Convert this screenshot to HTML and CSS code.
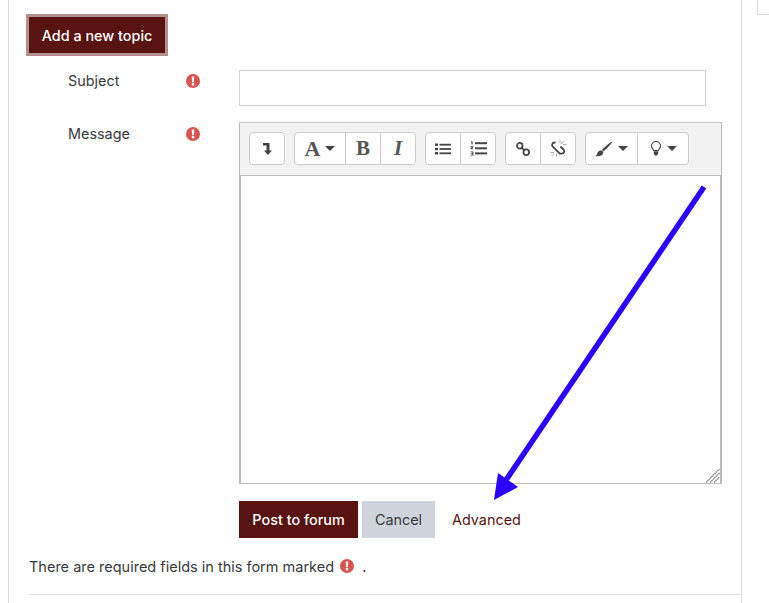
FILE: index.html
```html
<!DOCTYPE html>
<html lang="en">
<head>
<meta charset="utf-8">
<title>Add a new topic</title>
<link rel="stylesheet" href="styles.css">
</head>
<body>
<svg class="defs" width="0" height="0" aria-hidden="true">
  <symbol id="req" viewBox="0 0 14 14">
    <circle cx="7" cy="7" r="7" fill="#d9534f"/>
    <path d="M5.7 2.600h2.600l-.35 5.600H6.050z" fill="#fff"/>
    <rect x="5.800" y="9.100" width="2.400" height="2.400" rx=".5" fill="#fff"/>
  </symbol>
</svg>
<div class="page">
  <main class="card">
    <button class="btn-topic" type="button">Add a new topic</button>
    <form class="form">
      <div class="row row-subject">
        <label class="label">Subject</label>
        <svg class="req"><use href="#req"/></svg>
        <input class="input" type="text">
      </div>
      <div class="row row-message">
        <label class="label">Message</label>
        <svg class="req"><use href="#req"/></svg>
        <div class="editor">
          <div class="toolbar">
            <div class="group">
              <span class="tool w35"><svg width="12" height="15" viewBox="0 0 12 15"><path d="M2 2h6.500v7.500H11L6.900 14 3 9.500h2.500V4.500H2z" fill="#444"/></svg></span>
            </div>
            <div class="group">
              <span class="tool w50"><span class="glyph glyph-a">A</span><i class="caret"></i></span>
              <span class="tool w35"><span class="glyph">B</span></span>
              <span class="tool w35"><span class="glyph ital">I</span></span>
            </div>
            <div class="group">
              <span class="tool w35"><svg width="16" height="12" viewBox="0 0 16 12" fill="#444"><rect x="0" y="0.500" width="3" height="2.400"/><rect x="0" y="4.800" width="3" height="2.400"/><rect x="0" y="9.100" width="3" height="2.400"/><rect x="4.500" y="0.800" width="11.500" height="1.800"/><rect x="4.500" y="5.100" width="11.500" height="1.800"/><rect x="4.500" y="9.400" width="11.500" height="1.800"/></svg></span>
              <span class="tool w35"><svg width="17" height="15" viewBox="0 0 17 15" fill="#444"><path d="M1 .2h1.600v3.400H1.500V1.300H.8zM.4 5.300h3v1l-1.500 1.100h1.500v.9h-3v-.9L2 6.200H.4zM.4 10.400h3v4.200h-3v-.8h2v-.9H1.200v-.8h1.200v-.9h-2z"/><rect x="5" y="1.200" width="12" height="2"/><rect x="5" y="6.300" width="12" height="2"/><rect x="5" y="11.400" width="12" height="2"/></svg></span>
            </div>
            <div class="group">
              <span class="tool w35"><svg width="14" height="14" viewBox="0 0 15 15" fill="none" stroke="#444" stroke-width="1.900"><circle cx="4" cy="4" r="3"/><circle cx="11" cy="11" r="3"/><path d="M6 6l3 3"/></svg></span>
              <span class="tool w35"><svg width="17" height="17" viewBox="0 0 17 17" fill="none"><path d="M5.500 2.500H4.500a2.400 2.400 0 0 0-1.700 4.100l7 7h2a2.400 2.400 0 0 0 1.700-4.100L10.500 6.500" stroke="#444" stroke-width="1.800"/><path d="M10 0v3.500M13.500 1L11.500 4M16.500 4.500h-3.500M.5 12.500H4M1.500 16l2.500-2.500M6.500 17v-3.500" stroke="#aaa" stroke-width="1"/></svg></span>
            </div>
            <div class="group">
              <span class="tool w51"><svg width="18" height="16" viewBox="0 0 18 16" fill="#444"><path d="M17.500.5C18 1 12 7.500 8.700 10.300L7 8.800C10 5.500 17 0 17.500.5zM6.200 9.500c1.500 0 2.400 1.200 2 2.600C7.500 14.800 3.500 16 .2 15c2-.7 1.800-2.300 2.600-3.700.7-1.200 1.900-1.800 3.400-1.800z"/></svg><i class="caret"></i></span>
              <span class="tool w51"><svg width="12" height="15" viewBox="0 0 12 15" fill="none"><path d="M3.800 9.500C3.300 8 1.500 7.300 1.500 5a4.500 4.500 0 0 1 9 0c0 2.300-1.800 3-2.300 4.500z" stroke="#444" stroke-width="1.200"/><path d="M3.800 10.200h4.400v2.600L7 14.500H5l-1.200-1.700z" fill="#444"/></svg><i class="caret"></i></span>
            </div>
          </div>
          <div class="content">
            <svg class="grip" width="14" height="14" viewBox="0 0 14 14" stroke="#777" stroke-width="1.200" stroke-dasharray="1.500 .5"><path d="M0 13.500L13.500 0M4 13.500L13.500 4M8 13.500L13.500 8"/></svg>
          </div>
        </div>
      </div>
      <div class="actions">
        <button class="btn btn-primary" type="button">Post to forum</button>
        <button class="btn btn-cancel" type="button">Cancel</button>
        <a class="advanced" href="#">Advanced</a>
      </div>
      <p class="note">There are required fields in this form marked <svg class="req req-note"><use href="#req"/></svg> <span class="dot">.</span></p>
      <hr class="rule">
    </form>
    <svg class="arrow" width="240" height="330" viewBox="0 0 240 330">
      <path d="M212 3L12 299" stroke="#2b00ff" stroke-width="5.500" fill="none"/>
      <path d="M2 316L6 289L26 303z" fill="#2b00ff"/>
    </svg>
  </main>
  <aside class="side"></aside>
</div>
</body>
</html>
```
FILE: styles.css
```css
* { box-sizing: border-box; }
html, body { margin: 0; height: 100%; overflow: hidden; background: #fff; }
body { font-family: Inter, "Liberation Sans", sans-serif; font-size: 14.4px; color: #373a3c; }
.defs { position: absolute; }
.page { display: flex; height: 603px; padding-left: 8px; }
.card {
  position: relative;
  width: 735px;
  height: 603px;
  border-left: 1px solid #dfdfdf;
  border-right: 1px solid #dfdfdf;
  padding: 17px 0 0 20px;
}
.side {
  width: 12px;
  height: 15px;
  margin-left: 15px;
  border-left: 1px solid #dcdcdc;
  border-bottom: 1px solid #dcdcdc;
}
.btn-topic {
  display: block;
  width: 136px;
  height: 36px;
  border: 0;
  background: #591411;
  color: #fff;
  font: 500 14.4px Inter, "Liberation Sans", sans-serif;
  box-shadow: 0 0 0 3px #b38f8e;
  padding: 0;
}
.form { margin-top: 17px; }
.row { display: flex; align-items: flex-start; }
.label { width: 118px; margin-left: 39px; line-height: 22px; }
.req { width: 14px; height: 14px; display: block; }
.row .req { margin-top: 4px; }
.input {
  width: 467px;
  height: 36px;
  margin-left: 39px;
  border: 1px solid #ced4da;
  background: #fff;
}
.row-subject { height: 53px; }
.editor {
  width: 483px;
  height: 362px;
  margin-left: 39px;
  margin-top: -1px;
  border: 1px solid #bbb;
  border-top-color: #c4c4c4;
  display: flex;
  flex-direction: column;
}
.toolbar {
  height: 53px;
  flex: none;
  background: #f2f2f2;
  border-bottom: 1px solid #bbb;
  display: flex;
  gap: 9px;
  padding: 9px 0 0 9px;
}
.group {
  display: flex;
  height: 33px;
  background: #fff;
  border: 1px solid #ccc;
  border-radius: 4px;
}
.tool {
  display: flex;
  align-items: center;
  justify-content: center;
  gap: 5px;
  border-left: 1px solid #ccc;
  height: 31px;
}
.tool:first-child { border-left: 0; }
.w35 { width: 35px; }
.w50 { width: 50px; }
.w51 { width: 51px; }
.group .tool.w35:first-child { width: 34px; }
.glyph { font: 700 21px "Liberation Serif", serif; color: #555; }
.glyph-a { font-size: 22px; }
.ital { font-style: italic; }
.caret {
  width: 0;
  height: 0;
  border-left: 5px solid transparent;
  border-right: 5px solid transparent;
  border-top: 5px solid #444;
}
.content { position: relative; flex: 1; border: 1px solid #bbb; border-top: 0; border-bottom: 0; }
.grip { position: absolute; right: 0; bottom: 0; }
.actions { display: flex; align-items: center; margin: 17px 0 0 210px; }
.btn {
  height: 37px;
  border: 0;
  font: 14.4px Inter, "Liberation Sans", sans-serif;
  padding: 0;
}
.btn-primary { width: 119px; background: #591411; color: #fff; font-weight: 500; }
.btn-cancel { width: 73px; margin-left: 4px; background: #ced4da; color: #373a3c; }
.advanced { margin-left: 17px; color: #591411; text-decoration: none; }
.note { display: flex; align-items: center; margin: 17px 0 0 0; height: 22px; white-space: pre; font-size: 14.5px; }
.req-note { margin-left: 2px; }
.dot { margin-left: 8px; }
.rule { margin: 17px 0 0 0; border: 0; border-top: 1px solid #dfdfdf; }
.arrow { position: absolute; left: 483px; top: 184px; pointer-events: none; }
```
